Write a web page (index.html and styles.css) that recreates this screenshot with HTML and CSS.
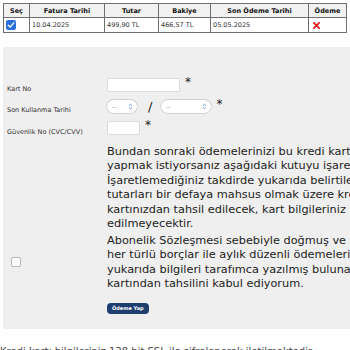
FILE: index.html
```html
<!DOCTYPE html>
<html lang="tr">
<head>
<meta charset="utf-8">
<link rel="stylesheet" href="styles.css">
</head>
<body>
<table class="bills">
  <thead>
    <tr>
      <th class="c-sec">Seç</th>
      <th class="c-fat">Fatura Tarihi</th>
      <th class="c-tut">Tutar</th>
      <th class="c-bak">Bakiye</th>
      <th class="c-son">Son Ödeme Tarihi</th>
      <th class="c-ode">Ödeme</th>
    </tr>
  </thead>
  <tbody>
    <tr>
      <td><span class="chk-on"><svg viewBox="0 0 10 10" width="10" height="10"><rect x="0" y="0" width="10" height="10" rx="2.2" fill="#2a6fe0"/><path d="M2.3 5.2 L4.2 7.1 L7.8 2.9" fill="none" stroke="#fff" stroke-width="1.4" stroke-linecap="round" stroke-linejoin="round"/></svg></span></td>
      <td>10.04.2025</td>
      <td>499,90 TL</td>
      <td>466,57 TL</td>
      <td>05.05.2025</td>
      <td><svg class="xicon" viewBox="0 0 8 8" width="7" height="7"><path d="M1 1 L7 7 M7 1 L1 7" stroke="#e02020" stroke-width="2" stroke-linecap="square"/></svg></td>
    </tr>
  </tbody>
</table>

<div class="panel">
  <div class="form">
    <div class="label">Kart No</div>
    <div class="field"><span class="input wide"></span><span class="req">*</span></div>

    <div class="label">Son Kullanma Tarihi</div>
    <div class="field">
      <span class="sel short"><span>--</span><svg viewBox="0 0 6 8" width="5" height="7"><path d="M1.2 3 L3 1.3 L4.8 3 M1.2 5 L3 6.7 L4.8 5" fill="none" stroke="#3d7be0" stroke-width="0.9"/></svg></span>
      <span class="slash">/</span>
      <span class="sel long"><span>--</span><svg viewBox="0 0 6 8" width="5" height="7"><path d="M1.2 3 L3 1.3 L4.8 3 M1.2 5 L3 6.7 L4.8 5" fill="none" stroke="#3d7be0" stroke-width="0.9"/></svg></span>
      <span class="req">*</span>
    </div>

    <div class="label">Güvenlik No (CVC/CVV)</div>
    <div class="field"><span class="input small"></span><span class="req">*</span></div>

    <div class="label"></div>
    <p class="text first">Bundan sonraki ödemelerinizi bu kredi kartı ile<br>yapmak istiyorsanız aşağıdaki kutuyu işaretleyiniz.<br>İşaretlemediğiniz takdirde yukarıda belirtilen fatura<br>tutarları bir defaya mahsus olmak üzere kredi<br>kartınızdan tahsil edilecek, kart bilgileriniz kayıt<br>edilmeyecektir.</p>

    <div class="label chk-cell"><span class="chk-off"></span></div>
    <p class="text second">Abonelik Sözleşmesi sebebiyle doğmuş ve doğacak<br>her türlü borçlar ile aylık düzenli ödemelerimin<br>yukarıda bilgileri tarafımca yazılmış bulunan kredi<br>kartından tahsilini kabul ediyorum.</p>

    <div class="label"></div>
    <div class="btn-row"><span class="btn">Ödeme Yap</span></div>
  </div>
</div>

<p class="note">Kredi kartı bilgileriniz 128 bit SSL ile şifrelenerek iletilmektedir.</p>
</body>
</html>
```

FILE: styles.css
```css
html, body {
  margin: 0;
  padding: 0;
  background: #ffffff;
  overflow: hidden;
}
body {
  font-family: "DejaVu Sans", Verdana, sans-serif;
  color: #222;
  width: 350px;
  height: 350px;
}
.bills {
  margin: 3px 0 0 3px;
  width: 344px;
  border-collapse: collapse;
  font-size: 6.5px;
  border: 1px solid #6f6f6f;
}
.bills th, .bills td {
  border: 1px solid #6f6f6f;
  height: 13px;
  padding: 0 2px;
}
.bills th {
  background: #f2f2f2;
  font-weight: bold;
  text-align: center;
  color: #111;
}
.bills td {
  text-align: left;
  color: #333;
  height: 14px;
}
.c-sec { width: 21px; }
.c-fat { width: 70px; }
.c-tut { width: 49px; }
.c-bak { width: 47px; }
.c-son { width: 93px; }
.chk-on { display: flex; align-items: center; }
.xicon { display: block; margin-left: 2px; }

.panel {
  margin: 14px 0 0 3px;
  background: #efefef;
  padding: 31px 0 15px 4px;
  overflow: hidden;
}
.form {
  display: grid;
  grid-template-columns: 100px 400px;
  align-items: center;
}
.label {
  font-size: 6.5px;
  color: #333;
}
.field {
  display: flex;
  align-items: center;
  height: 14px;
  margin-bottom: 7.5px;
}
.input {
  display: block;
  height: 12px;
  background: #fff;
  border: 1px solid #dcdcdc;
  border-radius: 2px;
}
.wide { width: 71px; }
.small { width: 31px; }
.req {
  font-size: 12px;
  margin-left: 5px;
  align-self: flex-start;
  line-height: 9px;
  color: #222;
}
.sel {
  display: flex;
  align-items: center;
  justify-content: space-between;
  height: 13px;
  padding: 0 4px 0 5px;
  background: #fff;
  border-radius: 7px;
  box-shadow: 0 0 0 0.7px #c8c8c8;
  font-size: 6px;
  color: #888;
  box-sizing: border-box;
}
.short { width: 30px; }
.long { width: 50px; }
.slash {
  font-size: 13px;
  margin: 0 9px 0 11px;
  color: #222;
}
.text {
  margin: 2px 0 0 0;
  font-size: 11.3px;
  line-height: 14.5px;
  color: #222;
  white-space: nowrap;
}
.text.second { margin-top: 2px; }
.chk-cell { display: flex; align-items: center; }
.chk-off {
  display: block;
  width: 8px;
  height: 8px;
  margin-left: 4px;
  background: #fff;
  border: 1px solid #b5b5b5;
  border-radius: 2px;
}
.btn-row { margin-top: 11px; display: flex; }
.btn {
  display: inline-block;
  background: #1f3e70;
  color: #fff;
  font-size: 5px;
  font-weight: bold;
  padding: 2.5px 5px;
  border-radius: 4px;
  line-height: 6px;
}
.note {
  margin: 17px 0 0 0;
  font-size: 10px;
  color: #444;
  white-space: nowrap;
}
```
